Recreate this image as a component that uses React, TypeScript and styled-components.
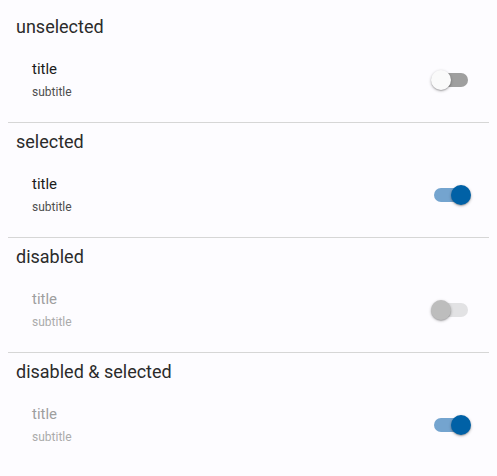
import React from 'react'
import styled, { createGlobalStyle } from 'styled-components'

const GlobalStyle = createGlobalStyle`
  body {
    margin: 0;
    background: #fdfcff;
    font-family: Roboto, 'Noto Sans', sans-serif;
  }
`

const Page = styled.div`
  padding: 8px;
`

const Section = styled.section<{ divided: boolean }>`
  height: 114px;
  border-top: ${(p) => (p.divided ? '1px solid #d6d6d6' : 'none')};
  display: flex;
  flex-direction: column;
`

const Heading = styled.div`
  padding: 9px 8px 0;
  height: 32px;
  font-size: 18px;
  line-height: 20px;
  color: #2b2b2b;
  box-sizing: border-box;
`

const Tile = styled.div`
  height: 64px;
  margin-top: 8px;
  padding: 0 21px 0 24px;
  display: flex;
  align-items: center;
  justify-content: space-between;
`

const Texts = styled.div`
  display: flex;
  flex-direction: column;
  margin-top: -1px;
`

const Title = styled.div<{ disabled: boolean }>`
  font-size: 15px;
  line-height: 20px;
  font-weight: 400;
  color: ${(p) => (p.disabled ? '#9f9f9f' : '#1c1c1c')};
`

const Subtitle = styled.div<{ disabled: boolean }>`
  font-size: 12px;
  line-height: 18px;
  margin-top: 4px;
  color: ${(p) => (p.disabled ? '#ababab' : '#4e4e4e')};
`

const Track = styled.div<{ on: boolean; disabled: boolean }>`
  position: relative;
  width: 34px;
  height: 14px;
  border-radius: 7px;
  background: ${(p) => (p.on ? '#74a4cf' : p.disabled ? '#e2e2e4' : '#9f9f9f')};
`

const Thumb = styled.div<{ on: boolean; disabled: boolean }>`
  position: absolute;
  top: -3px;
  left: ${(p) => (p.on ? '17px' : '-3px')};
  width: 20px;
  height: 20px;
  border-radius: 50%;
  background: ${(p) => (p.on ? '#0061a6' : p.disabled ? '#bdbdbd' : '#fafafa')};
  box-shadow: 0 1px 3px rgba(0, 0, 0, 0.3), 0 1px 1px rgba(0, 0, 0, 0.14);
`

const rows = [
  { label: 'unselected', on: false, disabled: false },
  { label: 'selected', on: true, disabled: false },
  { label: 'disabled', on: false, disabled: true },
  { label: 'disabled & selected', on: true, disabled: true },
]

export default function App() {
  return (
    <>
      <GlobalStyle />
      <Page>
        {rows.map((r, i) => (
          <Section key={r.label} divided={i > 0}>
            <Heading>{r.label}</Heading>
            <Tile>
              <Texts>
                <Title disabled={r.disabled}>title</Title>
                <Subtitle disabled={r.disabled}>subtitle</Subtitle>
              </Texts>
              <Track on={r.on} disabled={r.disabled}>
                <Thumb on={r.on} disabled={r.disabled} />
              </Track>
            </Tile>
          </Section>
        ))}
      </Page>
    </>
  )
}
